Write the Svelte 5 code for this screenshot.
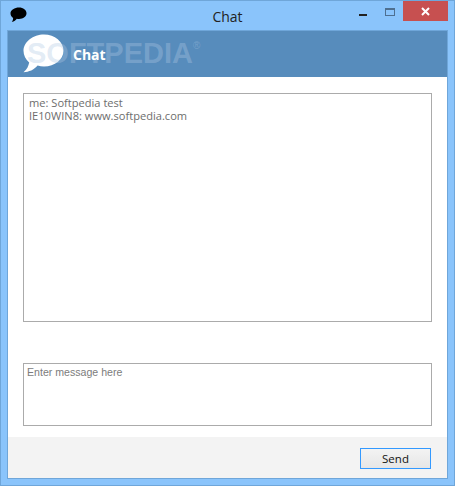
<script>
  let log = ['me: Softpedia test', 'IE10WIN8: www.softpedia.com'];
</script>

<div class="window">
  <div class="titlebar">
    <svg class="app-icon" width="17" height="16" viewBox="0 0 17 16">
      <path d="M9 .5c4.300 0 7.500 2.500 7.500 5.800S13.300 12 9 12c-.8 0-1.500-.1-2.200-.2C5.800 13.300 4.200 14.800 1.800 15c.8-1 1.300-2.200 1.300-4C1.500 9.900.5 8.200.5 6.300.5 3 4.700.5 9 .5z" fill="#000"/>
    </svg>
    <span class="title">Chat</span>
    <div class="controls">
      <span class="ctl min"><i></i></span>
      <span class="ctl max"><i></i></span>
      <span class="ctl close">
        <svg width="9" height="9" viewBox="0 0 9 9"><path d="M1 1l7 7M8 1L1 8" stroke="#fff" stroke-width="2" fill="none"/></svg>
      </span>
    </div>
  </div>

  <div class="client">
    <header class="banner">
      <svg class="bubble" width="41" height="39" viewBox="0 0 41 39">
        <path d="M21 .5c10.800 0 19.500 7.400 19.500 16.200S31.800 32.500 21 32.500c-2.300 0-4.400-.3-6.400-.9C11 36 6 38 .5 38.300 4 35.500 5.500 32 6.200 28.500 2.700 25.500.5 21.300.5 16.700.5 8 10.200.5 21 .5z" fill="#fff"/>
      </svg>
      <span class="watermark">SOFTPEDIA<sup>®</sup></span>
      <span class="banner-title">Chat</span>
    </header>

    <main class="body">
      <div class="log">
        {#each log as line}
          <div>{line}</div>
        {/each}
      </div>
      <div class="input">Enter message here</div>
    </main>

    <footer class="footer">
      <button class="send">Send</button>
    </footer>
  </div>
</div>

<style>
  :global(body) {
    margin: 0;
  }

  .window {
    width: 455px;
    height: 486px;
    box-sizing: border-box;
    background: #8ac4fb;
    border: 1px solid #6fa6d9;
    padding: 0 6px 6px;
    display: flex;
    flex-direction: column;
    font-family: "Open Sans", "Liberation Sans", sans-serif;
  }

  .titlebar {
    height: 29px;
    flex: none;
    display: flex;
    align-items: center;
    justify-content: center;
    position: relative;
  }

  .app-icon {
    position: absolute;
    left: 3px;
    top: 6px;
  }

  .title {
    font-size: 14px;
    color: #222;
    margin-top: 2px;
  }

  .controls {
    position: absolute;
    right: 0;
    top: 0;
    display: flex;
    height: 20px;
  }

  .ctl {
    display: flex;
    align-items: center;
    justify-content: center;
  }

  .min {
    width: 26px;
  }

  .min i {
    width: 8px;
    height: 2px;
    background: #222;
    margin-top: 8px;
  }

  .max {
    width: 27px;
  }

  .max i {
    width: 8px;
    height: 5px;
    border: 1px solid #4e6f90;
    border-top-width: 2px;
    margin-top: 2px;
  }

  .close {
    width: 45px;
    background: #c75050;
  }

  .client {
    flex: 1;
    display: flex;
    flex-direction: column;
    background: #fff;
    border: 1px solid #6fa6d9;
    min-height: 0;
  }

  .banner {
    height: 46px;
    flex: none;
    background: #578cbc;
    position: relative;
    overflow: hidden;
  }

  .bubble {
    position: absolute;
    left: 15px;
    top: 3px;
  }

  .watermark {
    position: absolute;
    left: 19px;
    top: 2px;
    font-family: "Liberation Sans", sans-serif;
    font-weight: 700;
    font-size: 29px;
    color: rgba(175, 200, 228, 0.36);
    line-height: 40px;
  }

  .watermark sup {
    font-size: 10px;
    font-weight: 400;
    vertical-align: 14px;
    line-height: 0;
  }

  .banner-title {
    position: absolute;
    left: 65px;
    top: 14px;
    font-size: 14px;
    font-weight: 700;
    color: #fff;
  }

  .body {
    flex: 1;
    padding: 16px 15px 11px 15px;
    display: flex;
    flex-direction: column;
  }

  .log {
    height: 229px;
    box-sizing: border-box;
    flex: none;
    border: 1px solid #ababab;
    padding: 2px 5px;
    font-size: 11.1px;
    line-height: 13px;
    color: #6d6d6d;
  }

  .input {
    height: 63px;
    box-sizing: border-box;
    margin-top: 41px;
    border: 1px solid #ababab;
    padding: 1px 3px;
    font-family: "Liberation Sans", sans-serif;
    font-size: 10.6px;
    line-height: 14px;
    color: #7c7c7c;
  }

  .footer {
    height: 41px;
    flex: none;
    background: #f3f3f3;
    display: flex;
    justify-content: flex-end;
    align-items: center;
    padding: 2px 16px 0 0;
    box-sizing: border-box;
  }

  .send {
    width: 71px;
    height: 21px;
    box-sizing: border-box;
    border: 1px solid #3399ff;
    background: linear-gradient(#f3f3f3, #e6e6e6);
    padding: 0;
    font-family: "Open Sans", sans-serif;
    font-size: 11.5px;
    color: #111;
  }
</style>
